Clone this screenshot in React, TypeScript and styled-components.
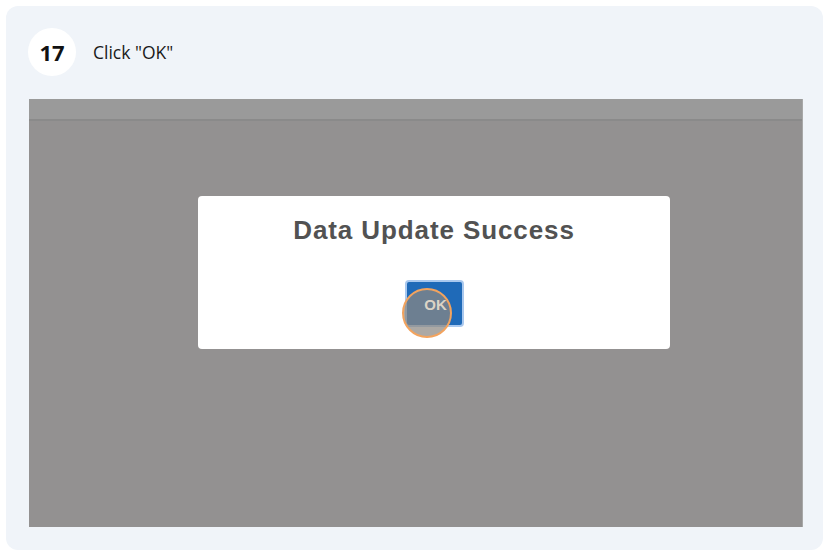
import React from "react";
import styled, { createGlobalStyle } from "styled-components";

const Global = createGlobalStyle`
  html, body { margin: 0; padding: 0; background: #ffffff; }
  body { font-family: "Open Sans", "Noto Sans", sans-serif; }
`;

const Card = styled.div`
  margin: 6px;
  width: 817px;
  height: 544px;
  box-sizing: border-box;
  background: #f0f4f9;
  border-radius: 12px;
  padding: 22px 20px 23px 23px;
  display: flex;
  flex-direction: column;
`;

const Header = styled.div`
  display: flex;
  align-items: center;
  gap: 17px;
  height: 48px;
  margin-left: -1px;
`;

const Badge = styled.div`
  width: 48px;
  height: 48px;
  border-radius: 50%;
  background: #ffffff;
  display: flex;
  align-items: center;
  justify-content: center;
  font-family: "Open Sans", sans-serif;
  font-weight: 700;
  font-size: 22px;
  color: #111111;
`;

const Title = styled.div`
  font-family: "Open Sans", sans-serif;
  font-size: 17.5px;
  color: #1a1a1a;
`;

const Shot = styled.div`
  margin-top: 23px;
  width: 774px;
  height: 428px;
  background: #939191;
  display: flex;
  flex-direction: column;
  border-right: 1px solid #a8a8a8;
  box-sizing: border-box;
`;

const TopStrip = styled.div`
  height: 20px;
  background: #9a9a9a;
  border-bottom: 2px solid #8a8a8a;
`;

const Stage = styled.div`
  padding: 75px 0 0 169px;
`;

const Dialog = styled.div`
  width: 472px;
  height: 153px;
  background: #ffffff;
  border-radius: 4px;
  display: flex;
  flex-direction: column;
  align-items: center;
  box-sizing: border-box;
  padding-top: 19px;
`;

const DialogTitle = styled.div`
  font-family: "Liberation Sans", Arial, sans-serif;
  font-weight: 700;
  font-size: 26px;
  letter-spacing: 0.9px;
  color: #525252;
  line-height: 30px;
`;

const ButtonWrap = styled.div`
  position: relative;
  margin-top: 35px;
`;

const OkButton = styled.div`
  position: relative;
  width: 55px;
  height: 39px;
  background: #1f6ab8;
  border: 2px solid #a9c8ee;
  border-radius: 4px;
  display: flex;
  align-items: center;
  justify-content: center;
  padding-bottom: 4px;
  box-sizing: content-box;
`;

const OkLabel = styled.span`
  position: relative;
  z-index: 2;
  font-family: "Liberation Sans", Arial, sans-serif;
  font-size: 15px;
  font-weight: 700;
  color: #dcd4c6;
  margin-left: 3px;
  margin-top: 6px;
`;

const Cursor = styled.div`
  position: absolute;
  z-index: 1;
  left: -3px;
  top: 8px;
  width: 50px;
  height: 50px;
  border-radius: 50%;
  background: rgba(140, 136, 130, 0.72);
  border: 2px solid #f2a35e;
  box-sizing: border-box;
`;

export default function App() {
  return (
    <>
      <Global />
      <Card>
        <Header>
          <Badge>17</Badge>
          <Title>Click "OK"</Title>
        </Header>
        <Shot>
          <TopStrip />
          <Stage>
            <Dialog>
              <DialogTitle>Data Update Success</DialogTitle>
              <ButtonWrap>
                <OkButton>
                  <OkLabel>OK</OkLabel>
                </OkButton>
                <Cursor />
              </ButtonWrap>
            </Dialog>
          </Stage>
        </Shot>
      </Card>
    </>
  );
}
